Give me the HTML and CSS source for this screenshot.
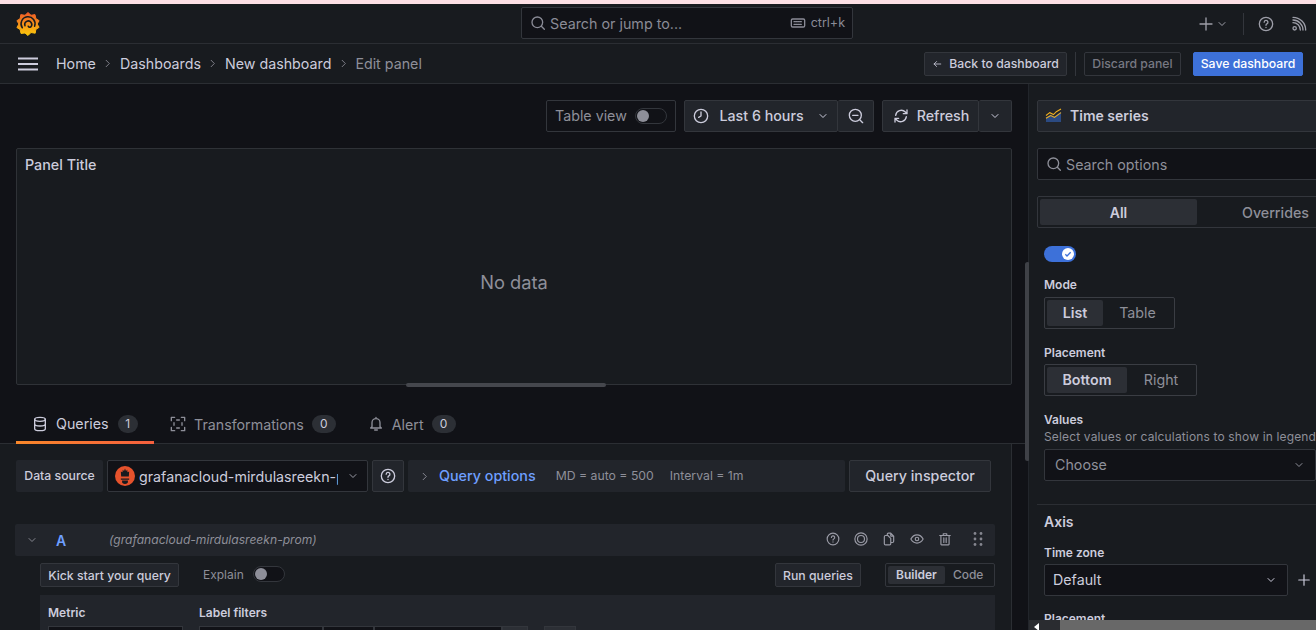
FILE: index.html
```html
<!DOCTYPE html>
<html lang="en">
<head>
    <meta charset="UTF-8">
    <title>Edit panel - Grafana</title>
    <link rel="stylesheet" href="styles.css">
</head>
<body>
    <div class="strip"></div>

    <header class="topbar">
        <svg class="logo" viewBox="0 0 24 26" width="24" height="26">
            <defs>
                <linearGradient id="logoFill" x1="0" y1="0" x2="0" y2="1">
                    <stop offset="0" stop-color="#f05a28"/>
                    <stop offset="1" stop-color="#fbca0a"/>
                </linearGradient>
            </defs>
            <path fill="url(#logoFill)" stroke="url(#logoFill)" stroke-linejoin="round" d="M12 1.500L15 4.300l4-.7.8 3.900 3.300 2.200-2 3.300 2 3.300-3.300 2.200-.6 3.700-4.200-.7L12 24.500l-3-2.500-4 .4-.8-3.800-3.300-2.100 2-3.500-2-3.300 3.300-2.100.6-4 4.200.7z"/>
            <path fill="none" stroke="#181b1f" stroke-width="1.500" stroke-linecap="round" d="M6.300 16.800A7 7 0 1 1 18.600 15.300M9 14.800a3.500 3.500 0 1 1 5.600 1.300 1.900 1.900 0 0 1-2.400-.9"/>
        </svg>
        <div class="search">
            <svg class="icon" viewBox="0 0 24 24" width="16" height="16"><circle cx="11" cy="11" r="8"/><path d="M17 17l4.500 4.500"/></svg>
            <span class="search-text">Search or jump to...</span>
            <svg class="icon kbd" viewBox="0 0 24 24" width="16" height="16"><rect x="2" y="6" width="20" height="12" rx="2"/><path d="M6 10h12M6 14h12" stroke-dasharray="2 1"/></svg>
            <span class="search-key">ctrl+k</span>
        </div>
        <div class="top-actions">
            <svg class="icon plus" viewBox="0 0 24 24" width="16" height="16"><path d="M12 3v18M3 12h18"/></svg>
            <svg class="icon" viewBox="0 0 24 24" width="12" height="12"><path d="M6 9l6 6 6-6"/></svg>
            <span class="top-sep"></span>
            <svg class="icon" viewBox="0 0 24 24" width="16" height="16"><circle cx="12" cy="12" r="10"/><path d="M9.300 9.300a2.800 2.800 0 1 1 4 2.600c-.9.500-1.300 1-1.300 2M12 17v.3"/></svg>
            <svg class="icon news" viewBox="0 0 24 24" width="16" height="16"><circle cx="5.500" cy="18.500" r="2.500"/><path d="M3 10a11 11 0 0 1 11 11M3 6a15 15 0 0 1 15 15M3 2a19 19 0 0 1 19 19"/></svg>
        </div>
    </header>

    <nav class="toolbar">
        <svg class="menu" viewBox="0 0 20 14" width="20" height="14"><path d="M0 1.500h20M0 7h20M0 12.500h20"/></svg>
        <ol class="crumbs">
            <li>Home</li>
            <li class="crumb-sep"><svg class="icon" viewBox="0 0 24 24" width="11" height="11"><path d="M9 5l7 7-7 7"/></svg></li>
            <li>Dashboards</li>
            <li class="crumb-sep"><svg class="icon" viewBox="0 0 24 24" width="11" height="11"><path d="M9 5l7 7-7 7"/></svg></li>
            <li>New dashboard</li>
            <li class="crumb-sep"><svg class="icon" viewBox="0 0 24 24" width="11" height="11"><path d="M9 5l7 7-7 7"/></svg></li>
            <li class="crumb-current">Edit panel</li>
        </ol>
        <div class="toolbar-actions">
            <button class="btn btn-small btn-back">
                <svg class="icon" viewBox="0 0 24 24" width="10" height="10"><path d="M21 12H5M11 6l-6 6 6 6"/></svg>
                Back to dashboard
            </button>
            <span class="toolbar-sep"></span>
            <button class="btn btn-small btn-discard">Discard panel</button>
            <button class="btn btn-small btn-save">Save dashboard</button>
        </div>
    </nav>

    <div class="editor">
        <main class="main">
            <div class="view-controls">
                <div class="table-view">
                    <span>Table view</span>
                    <span class="switch"><span class="knob"></span></span>
                </div>
                <div class="btn-group">
                    <button class="btn btn-time">
                        <svg class="icon" viewBox="0 0 24 24" width="16" height="16"><circle cx="12" cy="12" r="10"/><path d="M12 6v6l-3.500 2"/></svg>
                        <span>Last 6 hours</span>
                        <svg class="icon" viewBox="0 0 24 24" width="12" height="12"><path d="M6 9l6 6 6-6"/></svg>
                    </button>
                    <button class="btn btn-icon">
                        <svg class="icon" viewBox="0 0 24 24" width="16" height="16"><circle cx="11" cy="11" r="9"/><path d="M18 18l4 4M7 11h8"/></svg>
                    </button>
                </div>
                <div class="btn-group">
                    <button class="btn btn-refresh">
                        <svg class="icon" viewBox="0 0 24 24" width="16" height="16"><path d="M4 11a8.500 8.500 0 0 1 14.500-5L21 8.500M21 3v5.500h-5.500M20 13a8.500 8.500 0 0 1-14.500 5L3 15.500M3 21v-5.500h5.500"/></svg>
                        <span>Refresh</span>
                    </button>
                    <button class="btn btn-caret">
                        <svg class="icon" viewBox="0 0 24 24" width="12" height="12"><path d="M6 9l6 6 6-6"/></svg>
                    </button>
                </div>
            </div>

            <section class="panel">
                <h2 class="panel-title">Panel Title</h2>
                <div class="no-data">No data</div>
                <span class="split-handle"></span>
            </section>

            <div class="tabs">
                <div class="tab tab-active">
                    <svg class="icon" viewBox="0 0 24 24" width="16" height="16"><ellipse cx="12" cy="5" rx="8" ry="3"/><path d="M4 5v14c0 1.700 3.600 3 8 3s8-1.300 8-3V5M4 12c0 1.700 3.600 3 8 3s8-1.300 8-3"/></svg>
                    <span>Queries</span><span class="count">1</span>
                </div>
                <div class="tab">
                    <svg class="icon" viewBox="0 0 24 24" width="16" height="16"><path d="M2 7V2h5M17 2h5v5M22 17v5h-5M7 22H2v-5M10 6h4M6 10v4M18 10v4M10 18h4"/></svg>
                    <span>Transformations</span><span class="count">0</span>
                </div>
                <div class="tab">
                    <svg class="icon" viewBox="0 0 24 24" width="16" height="16"><path d="M6 16V10a6 6 0 0 1 12 0v6l2 2H4zM10 21h4M12 2v2"/></svg>
                    <span>Alert</span><span class="count">0</span>
                </div>
            </div>

            <section class="query-panel">
                <div class="ds-row">
                    <span class="ds-label">Data source</span>
                    <div class="ds-select">
                        <svg class="prom" viewBox="0 0 24 24" width="20" height="20">
                            <circle cx="12" cy="12" r="12" fill="#e6522c"/>
                            <path fill="#181b1f" d="M12 3l1.200 3 1.500-1.500.3 3 2-1-.4 6H7.400L7 6.500l2 1 .3-3L10.800 6zM7 15h10v1.500H7zM8.500 17.500h7V19a3.500 2.500 0 0 1-7 0z"/>
                        </svg>
                        <span class="ds-name">grafanacloud-mirdulasreekn-prom</span>
                        <svg class="icon" viewBox="0 0 24 24" width="12" height="12"><path d="M6 9l6 6 6-6"/></svg>
                    </div>
                    <button class="btn btn-help">
                        <svg class="icon" viewBox="0 0 24 24" width="16" height="16"><circle cx="12" cy="12" r="10"/><path d="M9.300 9.300a2.800 2.800 0 1 1 4 2.600c-.9.500-1.300 1-1.300 2M12 17v.3"/></svg>
                    </button>
                    <div class="query-options">
                        <svg class="icon" viewBox="0 0 24 24" width="11" height="11"><path d="M9 5l7 7-7 7"/></svg>
                        <span class="query-options-link">Query options</span>
                        <span class="query-meta">MD = auto = 500</span>
                        <span class="query-meta">Interval = 1m</span>
                    </div>
                    <button class="btn btn-inspector">Query inspector</button>
                </div>

                <div class="query-row">
                    <svg class="icon" viewBox="0 0 24 24" width="12" height="12"><path d="M6 9l6 6 6-6"/></svg>
                    <span class="query-letter">A</span>
                    <span class="query-ds">(grafanacloud-mirdulasreekn-prom)</span>
                    <div class="query-icons">
                        <svg class="icon" viewBox="0 0 24 24" width="14" height="14"><circle cx="12" cy="12" r="10"/><path d="M9.300 9.300a2.800 2.800 0 1 1 4 2.600c-.9.500-1.300 1-1.300 2M12 17v.3"/></svg>
                        <svg class="icon" viewBox="0 0 24 24" width="14" height="14"><circle cx="12" cy="12" r="10.500"/><circle cx="12" cy="12" r="6"/></svg>
                        <svg class="icon" viewBox="0 0 24 24" width="14" height="14"><path d="M9 6V4a2 2 0 0 1 2-2h4l5 5v9a2 2 0 0 1-2 2h-3M15 2v5h5M4 8a2 2 0 0 1 2-2h4l5 5v9a2 2 0 0 1-2 2H6a2 2 0 0 1-2-2z"/></svg>
                        <svg class="icon" viewBox="0 0 24 24" width="14" height="14"><path d="M1.500 12C4 7.500 7.700 5 12 5s8 2.500 10.500 7c-2.500 4.500-6.200 7-10.500 7s-8-2.500-10.500-7z"/><circle cx="12" cy="12" r="3"/></svg>
                        <svg class="icon" viewBox="0 0 24 24" width="14" height="14"><path d="M3 6h18M9 6V3h6v3M5 6v15a1 1 0 0 0 1 1h12a1 1 0 0 0 1-1V6M10 10v8M14 10v8"/></svg>
                        <svg class="grip" viewBox="0 0 10 16" width="10" height="16"><circle cx="2" cy="2.500" r="1.400"/><circle cx="8" cy="2.500" r="1.400"/><circle cx="2" cy="8" r="1.400"/><circle cx="8" cy="8" r="1.400"/><circle cx="2" cy="13.500" r="1.400"/><circle cx="8" cy="13.500" r="1.400"/></svg>
                    </div>
                </div>

                <div class="builder-bar">
                    <button class="btn btn-small btn-kick">Kick start your query</button>
                    <span class="explain">Explain</span>
                    <span class="switch switch-small"><span class="knob"></span></span>
                    <button class="btn btn-small btn-run">Run queries</button>
                    <div class="mini-seg">
                        <span class="mini-on">Builder</span>
                        <span>Code</span>
                    </div>
                </div>

                <div class="builder">
                    <div class="field-metric">
                        <div class="builder-label">Metric</div>
                        <div class="builder-input"></div>
                    </div>
                    <div class="field-labels">
                        <div class="builder-label">Label filters</div>
                        <div class="filter-inputs">
                            <span class="filter-a"></span>
                            <span class="filter-b"></span>
                            <span class="filter-c"></span>
                            <span class="filter-d"></span>
                            <span class="filter-add"></span>
                        </div>
                    </div>
                </div>
            </section>
            <span class="main-scroll"></span>
        </main>

        <aside class="side">
            <div class="side-inner">
                <div class="viz-picker">
                    <svg viewBox="0 0 18 16" width="17" height="15">
                        <path fill="#2f5aa8" opacity=".7" d="M1 10l5-3 4 2 7-5v11H1z"/>
                        <path fill="none" stroke="#f2b01e" stroke-width="1.100" d="M1 8l4-3 4 2 3-3 5-3M1 11l5-3 4 2 7-5"/>
                    </svg>
                    <span>Time series</span>
                </div>
                <div class="side-search">
                    <svg class="icon" viewBox="0 0 24 24" width="16" height="16"><circle cx="11" cy="11" r="8"/><path d="M17 17l4.500 4.500"/></svg>
                    <span>Search options</span>
                </div>
                <div class="side-tabs">
                    <span class="side-tab side-tab-on">All</span>
                    <span class="side-tab">Overrides</span>
                </div>

                <div class="options">
                    <span class="switch-on"><span class="knob-on"><svg viewBox="0 0 24 24" width="8" height="8"><path d="M4 13l5 5L20 7"/></svg></span></span>

                    <label class="opt-label opt-mode">Mode</label>
                    <div class="seg seg-mode">
                        <span class="seg-on">List</span>
                        <span>Table</span>
                    </div>

                    <label class="opt-label">Placement</label>
                    <div class="seg seg-place">
                        <span class="seg-on">Bottom</span>
                        <span>Right</span>
                    </div>

                    <label class="opt-label opt-values">Values</label>
                    <p class="opt-desc">Select values or calculations to show in legend</p>
                    <div class="select select-values">
                        <span class="select-ph">Choose</span>
                        <svg class="icon" viewBox="0 0 24 24" width="12" height="12"><path d="M6 9l6 6 6-6"/></svg>
                    </div>
                </div>

                <div class="axis">
                    <h3 class="axis-title">Axis</h3>
                    <label class="opt-label">Time zone</label>
                    <div class="tz-row">
                        <div class="select select-tz">
                            <span>Default</span>
                            <svg class="icon" viewBox="0 0 24 24" width="12" height="12"><path d="M6 9l6 6 6-6"/></svg>
                        </div>
                        <svg class="icon tz-plus" viewBox="0 0 24 24" width="14" height="14"><path d="M12 3v18M3 12h18"/></svg>
                    </div>
                    <label class="opt-label opt-last">Placement</label>
                </div>
            </div>
            <div class="hscroll">
                <span class="hscroll-arrow"></span>
                <span class="hscroll-thumb"></span>
            </div>
        </aside>
    </div>
</body>
</html>
```

FILE: styles.css
```css
* {
    box-sizing: border-box;
}
body {
    margin: 0;
    width: 1316px;
    height: 630px;
    overflow: hidden;
    background: #111217;
    color: #ccccdc;
    font-family: Inter, "Liberation Sans", sans-serif;
    font-size: 14.25px;
    font-weight: 500;
}
button {
    font-family: inherit;
}
svg.icon {
    fill: none;
    stroke: currentColor;
    stroke-width: 2;
    stroke-linecap: round;
    stroke-linejoin: round;
    flex: none;
}
.strip {
    height: 4px;
    background: #fde0e5;
}

/* top bars */
.topbar {
    height: 40px;
    padding: 0 0 0 16px;
    display: flex;
    align-items: center;
    background: #181b1f;
    border-bottom: 1px solid #2b2e33;
    color: #9a9ba6;
}
.logo {
    flex: none;
}
.search {
    width: 332px;
    height: 32px;
    margin: -2px 0 0 481px;
    padding: 0 7px 0 8px;
    display: flex;
    align-items: center;
    background: #111217;
    border: 1px solid #33363c;
    border-radius: 2px;
    color: #8a8b96;
}
.search-text {
    margin: 2px 0 0 4px;
    font-weight: 400;
    font-size: 14.300px;
}
.kbd {
    margin-left: auto;
}
.search-key {
    margin-left: 5px;
    font-size: 12.500px;
    font-weight: 400;
}
.top-actions {
    margin-left: auto;
    width: 120px;
    display: flex;
    align-items: center;
    padding-left: 2px;
    color: #9d9ea8;
}
.top-actions .plus {
    margin-right: 2px;
}
.top-sep {
    width: 1px;
    height: 22px;
    margin: 0 14px 0 15px;
    background: #33363c;
}
.news {
    margin-left: 17px;
}
.toolbar {
    height: 40px;
    padding: 0 13px 0 18px;
    display: flex;
    align-items: center;
    background: #181b1f;
    border-bottom: 1px solid #2b2e33;
}
.menu {
    fill: none;
    stroke: #ccccdc;
    stroke-width: 2;
    flex: none;
}
.crumbs {
    list-style: none;
    margin: 0 0 0 18px;
    padding: 0;
    display: flex;
    align-items: center;
    font-size: 14.250px;
    font-weight: 400;
}
.crumb-sep {
    width: 24px;
    display: flex;
    justify-content: center;
    color: #85868f;
}
.crumb-current {
    color: #8e8f99;
}
.toolbar-actions {
    margin-left: auto;
    display: flex;
    align-items: center;
}
.btn {
    height: 32px;
    display: inline-flex;
    align-items: center;
    justify-content: center;
    background: #22252b;
    border: 1px solid #33363c;
    border-radius: 2px;
    color: #ccccdc;
    font-size: 14.250px;
    font-weight: 500;
    padding: 0 0 1px;
}
.btn-small {
    height: 24px;
    padding-bottom: 0;
    font-size: 12.250px;
}
.btn-back {
    width: 143px;
    gap: 7px;
}
.toolbar-sep {
    width: 1px;
    height: 24px;
    margin: 0 8px;
    background: #33363c;
}
.btn-discard {
    width: 97px;
    background: transparent;
    color: #777882;
}
.btn-save {
    width: 110px;
    margin-left: 12px;
    background: #3d71d9;
    border-color: #3d71d9;
    color: #fff;
}

/* main column */
.editor {
    height: 546px;
    display: flex;
}
.main {
    position: relative;
    width: 1029px;
    flex: none;
    border-right: 1px solid #22252b;
}
.view-controls {
    height: 64px;
    padding: 16px 16px 0 0;
    display: flex;
    justify-content: flex-end;
    gap: 8px;
}
.table-view {
    width: 130px;
    height: 32px;
    padding: 0 8px 1px;
    display: flex;
    align-items: center;
    justify-content: space-between;
    background: #111217;
    border: 1px solid #33363c;
    border-radius: 2px;
    color: #8e8f99;
    font-weight: 400;
}
.switch {
    position: relative;
    width: 32px;
    height: 16px;
    display: block;
    flex: none;
    background: #111217;
    border: 1px solid #33363c;
    border-radius: 8px;
}
.knob {
    position: absolute;
    left: 1px;
    top: 1px;
    width: 12px;
    height: 12px;
    border-radius: 50%;
    background: #8e8f99;
}
.btn-group {
    display: flex;
}
.btn-group .btn + .btn {
    border-left: 0;
}
.btn-time {
    width: 154px;
    gap: 8px;
}
.btn-time span {
    margin: 0 5px 0 2px;
}
.btn-icon {
    width: 36px;
}
.btn-refresh {
    width: 97px;
    padding-left: 1px;
    gap: 8px;
}
.btn-caret {
    width: 33px;
}
.panel {
    position: relative;
    width: 996px;
    height: 237px;
    margin-left: 16px;
    background: #181b1f;
    border: 1px solid #2f3237;
    border-radius: 2px;
}
.panel-title {
    margin: 0;
    padding: 7px 8px;
    font-size: 14.300px;
    font-weight: 500;
    line-height: 18px;
}
.no-data {
    margin-top: 89px;
    text-align: center;
    color: #8e8f99;
    font-size: 18.300px;
    font-weight: 400;
    line-height: 24px;
}
.split-handle {
    position: absolute;
    left: 389px;
    bottom: -3px;
    width: 200px;
    height: 4px;
    border-radius: 2px;
    background: #45474d;
}
.tabs {
    height: 59px;
    padding: 19px 0 0 16px;
    display: flex;
    background: #111217;
    border-bottom: 1px solid #2b2e33;
}
.tab {
    height: 40px;
    padding: 0 16px;
    display: flex;
    align-items: center;
    gap: 8px;
    color: #8e8f99;
    font-weight: 400;
}
.tab-active {
    width: 138px;
    color: #ccccdc;
    border-bottom: 3px solid #f55f3e;
    border-image: linear-gradient(90deg, #f9882a, #f55f3e) 1;
    padding-top: 2px;
}
.count {
    width: 24px;
    border-radius: 10px;
    background: #2c2f35;
    color: #ccccdc;
    font-size: 12px;
    line-height: 18px;
    text-align: center;
}
.tab-active .count {
    width: 21px;
    margin-left: 1px;
}
.query-panel {
    width: 1012px;
    height: 186px;
    overflow: hidden;
    background: #181b1f;
    border-right: 1px solid #2b2e33;
    padding: 16px 16px 0;
}
.main-scroll {
    position: absolute;
    right: -2px;
    top: 178px;
    width: 5px;
    height: 199px;
    border-radius: 3px;
    background: #3f4147;
}
.ds-row {
    display: flex;
    height: 32px;
}
.ds-label {
    width: 87px;
    margin-right: 4px;
    padding-bottom: 1px;
    display: flex;
    align-items: center;
    justify-content: center;
    background: #22252b;
    border-radius: 2px;
    font-size: 12.250px;
}
.ds-select {
    width: 261px;
    margin-right: 4px;
    padding: 0 8px 0 7px;
    display: flex;
    align-items: center;
    background: #111217;
    border: 1px solid #33363c;
    border-radius: 2px;
    color: #9a9ba6;
    font-weight: 400;
}
.prom {
    flex: none;
}
.ds-name {
    width: 200px;
    margin: 0 9px 0 4px;
    overflow: hidden;
    white-space: nowrap;
    color: #ccccdc;
}
.btn-help {
    width: 32px;
    margin-right: 4px;
}
.query-options {
    width: 437px;
    margin-right: 4px;
    padding-left: 11px;
    display: flex;
    align-items: center;
    background: #22252b;
    border-radius: 2px;
    color: #8e8f99;
}
.query-options-link {
    margin: 0 20px 1px 9px;
    color: #6e9fff;
    font-size: 14.300px;
}
.query-meta {
    margin: 0 16px 2px 0;
    font-size: 12.250px;
    font-weight: 400;
}
.btn-inspector {
    width: 142px;
}
.query-row {
    width: 980px;
    height: 32px;
    margin-top: 32px;
    margin-left: -1px;
    padding-left: 11px;
    display: flex;
    align-items: center;
    background: #22252b;
    border-radius: 2px;
    color: #85868f;
}
.query-letter {
    width: 53px;
    margin-left: 18px;
    color: #6e9fff;
    font-size: 14px;
    font-weight: 600;
}
.query-ds {
    margin-bottom: 2px;
    color: #8e8f99;
    font-size: 12.100px;
    font-style: italic;
    font-weight: 400;
}
.query-icons {
    margin: 0 0 2px auto;
    padding-right: 12px;
    display: flex;
    align-items: center;
    gap: 14px;
    color: #9a9ba6;
}
.grip {
    margin-left: 7px;
    fill: #85868f;
}
.builder-bar {
    height: 24px;
    margin: 7px 0 0 24px;
    width: 955px;
    display: flex;
    align-items: center;
}
.btn-kick {
    width: 139px;
}
.explain {
    margin: -1px 9px 0 24px;
    color: #8e8f99;
    font-size: 12px;
    font-weight: 400;
}
.switch-small {
    margin-top: -3px;
}
.btn-run {
    width: 86px;
    margin-left: auto;
    margin-right: 24px;
}
.mini-seg {
    width: 110px;
    height: 24px;
    margin-left: 0;
    padding: 2px;
    display: flex;
    align-items: center;
    border: 1px solid #33363c;
    border-radius: 2px;
    color: #8e8f99;
    font-size: 12px;
}
.mini-seg span {
    padding: 0 8px;
    line-height: 18px;
}
.mini-seg .mini-on {
    background: #2c2f35;
    color: #ccccdc;
    font-weight: 600;
    border-radius: 2px;
}
.builder {
    width: 955px;
    height: 60px;
    margin: 8px 0 0 24px;
    padding: 9px 8px 0;
    display: flex;
    background: #22252b;
    font-size: 12px;
}
.builder-label {
    height: 22px;
    padding-top: 1px;
    line-height: 16px;
    font-weight: 600;
}
.field-metric {
    width: 151px;
}
.builder-input {
    width: 135px;
    height: 32px;
    background: #111217;
    border: 1px solid #33363c;
}
.filter-inputs {
    display: flex;
    height: 32px;
}
.filter-inputs span {
    display: block;
    background: #111217;
    border: 1px solid #33363c;
}
.filter-a {
    width: 124px;
}
.filter-b {
    width: 51px;
}
.filter-c {
    width: 128px;
}
.filter-inputs .filter-d {
    width: 26px;
    background: #2c2f35;
}
.filter-inputs .filter-add {
    width: 32px;
    margin-left: 16px;
    background: #2c2f35;
}

/* right column */
.side {
    position: relative;
    flex: 1;
    min-width: 0;
    overflow: hidden;
    background: #181b1f;
}
.side-inner {
    width: 340px;
    padding: 16px 0 0 8px;
}
.viz-picker {
    height: 32px;
    padding: 0 0 1px 7px;
    display: flex;
    align-items: center;
    gap: 8px;
    background: #22252b;
    border: 1px solid #33363c;
    border-radius: 2px;
    font-size: 14px;
    font-weight: 600;
}
.side-search {
    height: 32px;
    margin-top: 16px;
    padding-left: 8px;
    display: flex;
    align-items: center;
    gap: 4px;
    background: #111217;
    border: 1px solid #33363c;
    border-radius: 2px;
    color: #8e8f99;
    font-weight: 400;
}
.side-tabs {
    height: 32px;
    margin-top: 16px;
    padding: 2px;
    display: flex;
    border: 1px solid #33363c;
    border-radius: 2px;
    color: #8e8f99;
}
.side-tab {
    width: 157px;
    display: flex;
    align-items: center;
    justify-content: center;
}
.side-tab-on {
    background: #2c2f35;
    color: #ccccdc;
    border-radius: 2px;
    font-weight: 600;
    font-size: 14px;
}
.options {
    padding: 18px 0 0 7px;
    height: 276px;
}
.switch-on {
    position: relative;
    display: block;
    width: 32px;
    height: 16px;
    border-radius: 8px;
    background: #3d71d9;
}
.knob-on {
    position: absolute;
    right: 2px;
    top: 2px;
    width: 12px;
    height: 12px;
    display: flex;
    align-items: center;
    justify-content: center;
    border-radius: 50%;
    background: #fff;
}
.knob-on svg {
    fill: none;
    stroke: #3d71d9;
    stroke-width: 4;
}
.opt-label {
    display: block;
    margin-top: 16px;
    font-size: 12px;
    line-height: 16px;
    font-weight: 600;
}
.opt-mode {
    margin-top: 15px;
}
.seg {
    height: 32px;
    margin-top: 4px;
    padding: 2px;
    display: flex;
    align-items: stretch;
    border: 1px solid #3a3d43;
    border-radius: 2px;
    color: #8e8f99;
    font-weight: 400;
}
.seg span {
    flex: none;
    padding-bottom: 1px;
    display: flex;
    align-items: center;
    justify-content: center;
}
.seg .seg-on {
    background: #2c2f35;
    color: #ccccdc;
    border-radius: 2px;
    font-weight: 600;
    font-size: 14.250px;
}
.seg-mode {
    width: 131px;
}
.seg-mode span {
    width: 69px;
}
.seg-mode .seg-on {
    width: 56px;
}
.seg-place {
    width: 153px;
    margin-top: 3px;
}
.seg-place span {
    width: 68px;
}
.seg-place .seg-on {
    width: 80px;
}
.opt-values {
    margin-top: 16px;
}
.opt-desc {
    margin: 1px 0 0;
    font-size: 12px;
    line-height: 16px;
    font-weight: 400;
    letter-spacing: .15px;
    color: #8e8f99;
    white-space: nowrap;
}
.select {
    height: 32px;
    display: flex;
    align-items: center;
    justify-content: space-between;
    background: #111217;
    border: 1px solid #33363c;
    border-radius: 2px;
    color: #ccccdc;
    font-weight: 400;
    padding: 0 10px 0 8px;
}
.select-values {
    width: 272px;
    margin-top: 4px;
    padding-bottom: 1px;
    color: #8e8f99;
}
.select-ph {
    padding-left: 2px;
}
.axis {
    width: 332px;
    border-top: 1px solid #2b2e33;
    padding: 7px 0 0 7px;
}
.axis-title {
    margin: 0;
    font-size: 14px;
    font-weight: 600;
    line-height: 20px;
}
.axis .opt-label {
    margin-top: 13px;
}
.tz-row {
    margin-top: 3px;
    display: flex;
    align-items: center;
}
.select-tz {
    width: 244px;
    padding-bottom: 1px;
}
.tz-plus {
    margin-left: 9px;
}
.axis .opt-last {
    margin-top: 15px;
}
.hscroll {
    position: absolute;
    left: 0;
    right: 0;
    bottom: 0;
    height: 10px;
    display: flex;
    background: #2a2c30;
}
.hscroll-arrow {
    width: 31px;
    position: relative;
}
.hscroll-arrow::after {
    content: "";
    position: absolute;
    left: 5px;
    top: 3px;
    border-style: solid;
    border-width: 4px 5px 4px 0;
    border-color: transparent #fff transparent transparent;
}
.hscroll-thumb {
    flex: 1;
    background: #686868;
}
```
